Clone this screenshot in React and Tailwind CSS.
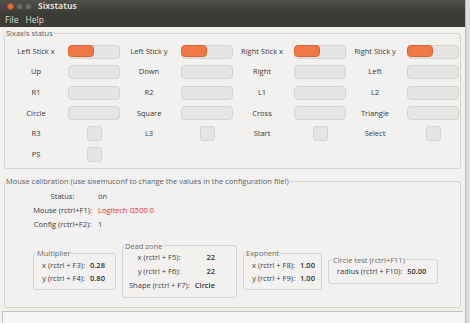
import React from "react";

const gridRows = [
  [
    ["Left Stick x", "stick"],
    ["Left Stick y", "stick"],
    ["Right Stick x", "stick"],
    ["Right Stick y", "stick"],
  ],
  [
    ["Up", "bar"],
    ["Down", "bar"],
    ["Right", "bar"],
    ["Left", "bar"],
  ],
  [
    ["R1", "bar"],
    ["R2", "bar"],
    ["L1", "bar"],
    ["L2", "bar"],
  ],
  [
    ["Circle", "bar"],
    ["Square", "bar"],
    ["Cross", "bar"],
    ["Triangle", "bar"],
  ],
  [
    ["R3", "btn"],
    ["L3", "btn"],
    ["Start", "btn"],
    ["Select", "btn"],
  ],
  [["PS", "btn"]],
];

const Control = ({ kind }) => {
  if (kind === "btn") {
    return (
      <div className="w-[15px] h-[15px] rounded-[3px] border border-[#d6d4d0] bg-[#e6e5e3]" />
    );
  }
  return (
    <div className="w-[52px] h-[14px] rounded-[4px] border border-[#d6d4d0] bg-[#e6e5e3] flex">
      {kind === "stick" && (
        <div className="w-[26px] h-full rounded-[4px] bg-[#f07746] border border-[#e0622f] -m-[1px]" />
      )}
    </div>
  );
};

const SubFrame = ({ title, className, children, legendClass = "ml-[1px]" }) => (
  <fieldset className={`border border-[#d6d3ce] rounded-[3px] ${className}`}>
    <legend className={`${legendClass} px-[1px] text-[#6a6a6a] leading-[10px]`}>
      {title}
    </legend>
    {children}
  </fieldset>
);

const App = () => {
  return (
    <div className="w-[470px] h-[323px] bg-[#dcdcdc] overflow-hidden font-['Open_Sans','Liberation_Sans',sans-serif] text-[7.5px] text-[#3c3c3c]">
      <div className="w-[466px] h-[323px] bg-[#f2f1f0] flex flex-col border-r border-[#b8b6b2]">
        {/* title bar */}
        <div className="h-[13px] bg-gradient-to-b from-[#514f4a] to-[#3d3c38] flex items-center">
          <div className="flex items-center gap-[2px] pl-[7px]">
            <div className="w-[7px] h-[7px] rounded-full bg-[#e96b3a] border border-[#b24a22]" />
            <div className="w-[7px] h-[7px] rounded-full bg-[#6d6b66] border border-[#4d4b47]" />
            <div className="w-[7px] h-[7px] rounded-full bg-[#6d6b66] border border-[#4d4b47]" />
          </div>
          <span className="ml-[6px] font-bold text-[8.5px] text-[#dfdbd2]">Sixstatus</span>
        </div>
        {/* menu bar */}
        <div className="h-[14px] bg-[#3c3b37] flex items-center gap-[7px] pl-[5px] text-[8.5px] text-[#dfdbd2]">
          <span>File</span>
          <span>Help</span>
        </div>

        <div className="flex flex-col px-[4px] pt-[1px]">
          {/* sixaxis status */}
          <fieldset className="border border-[#d6d3ce] rounded-[3px] pb-[6px]">
            <legend className="px-[1px] text-[#5e5e5e] leading-[11px]">Sixaxis status</legend>
            <div className="grid grid-cols-[repeat(4,113px)] gap-y-[5.6px] mt-[5px] pl-[3px]">
              {gridRows.map((row) =>
                row.map(([label, kind]) => (
                  <div key={label} className="flex items-center h-[15px]">
                    <span className="w-[56px] text-center text-[#3a3a3a]">{label}</span>
                    <div className="ml-[4px] w-[52px] flex justify-center">
                      <Control kind={kind} />
                    </div>
                  </div>
                ))
              )}
            </div>
          </fieldset>

          {/* mouse calibration */}
          <fieldset className="mt-[7px] border border-[#d6d3ce] rounded-[3px] pb-[9px]">
            <legend className="px-[1px] text-[#5e5e5e] leading-[11px]">
              Mouse calibration (use sixemuconf to change the values in the configuration file!)
            </legend>
            <div className="flex flex-col mt-[3px] pl-[28px]">
              <div className="flex items-center h-[14px]">
                <span className="w-[59px] text-center">Status:</span>
                <span className="ml-[6px]">on</span>
              </div>
              <div className="flex items-center h-[14px]">
                <span className="w-[59px] text-center">Mouse (rctrl+F1):</span>
                <span className="ml-[6px] text-[#ef2929]">Logitech G500 0</span>
              </div>
              <div className="flex items-center h-[14px]">
                <span className="w-[59px] text-center">Config (rctrl+F2):</span>
                <span className="ml-[6px]">1</span>
              </div>
            </div>

            <div className="flex items-center gap-[6px] mt-[9px] pl-[28px]">
              <SubFrame title="Multiplier" className="w-[83px] pb-[4px]" legendClass="ml-[2px]">
                {[["x (rctrl + F3):", "0.28"], ["y (rctrl + F4):", "0.80"]].map(([l, v]) => (
                  <div key={l} className="flex items-center h-[13.5px] pl-[4px]">
                    <span className="w-[51px] text-center">{l}</span>
                    <span className="pl-[1px] font-semibold text-[#333]">{v}</span>
                  </div>
                ))}
              </SubFrame>

              <SubFrame title="Dead zone" className="w-[115px] pb-[4px]">
                {[
                  ["x (rctrl + F5):", "22"],
                  ["y (rctrl + F6):", "22"],
                  ["Shape (rctrl + F7):", "Circle"],
                ].map(([l, v]) => (
                  <div key={l} className="flex items-center h-[14px] pl-[6px]">
                    <span className="w-[60px] text-center whitespace-nowrap">{l}</span>
                    <span className="w-[26px] text-right font-semibold text-[#333]">{v}</span>
                  </div>
                ))}
              </SubFrame>

              <SubFrame title="Exponent" className="w-[79px] pb-[4px]">
                {[["x (rctrl + F8):", "1.00"], ["y (rctrl + F9):", "1.00"]].map(([l, v]) => (
                  <div key={l} className="flex items-center h-[13.5px] pl-[4px]">
                    <span className="w-[51px] text-center">{l}</span>
                    <span className="pl-[1px] font-semibold text-[#333]">{v}</span>
                  </div>
                ))}
              </SubFrame>

              <SubFrame title="Circle test (rctrl+F11)" className="w-[110px] pb-[4px]" legendClass="ml-[3px]">
                <div className="flex items-center h-[14px] gap-[5px] pl-[8px]">
                  <span>radius (rctrl + F10):</span>
                  <span className="font-semibold text-[#333]">50.00</span>
                </div>
              </SubFrame>
            </div>
          </fieldset>
        </div>

        {/* status bar */}
        <div className="mt-auto mx-[2px] h-[12px] border-t border-l border-[#c4c1bc] bg-[#f6f5f4]" />
      </div>
    </div>
  );
};

export default App;
